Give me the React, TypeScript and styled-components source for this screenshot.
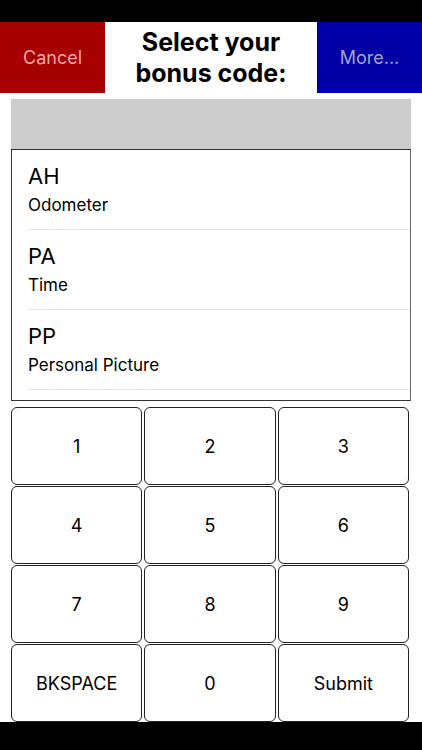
import React from 'react';
import styled, { createGlobalStyle } from 'styled-components';

const GlobalStyle = createGlobalStyle`
    html, body {
        margin: 0;
        padding: 0;
        background: #fff;
    }
    body {
        font-family: Inter, Roboto, "Liberation Sans", sans-serif;
    }
`;

const bonuses = [
    { code: 'AH', name: 'Odometer' },
    { code: 'PA', name: 'Time' },
    { code: 'PP', name: 'Personal Picture' },
];

const keys = ['1', '2', '3', '4', '5', '6', '7', '8', '9', 'BKSPACE', '0', 'Submit'];

const App: React.FC = () => {
    return (
        <Screen>
            <GlobalStyle />
            <StatusBar />
            <Header>
                <HeaderButton $bg="#a60000" $fg="#f2a6a6">Cancel</HeaderButton>
                <Title>
                    Select your
                    <br />
                    bonus code:
                </Title>
                <HeaderButton $bg="#0000a6" $fg="#a3a3c9">More...</HeaderButton>
            </Header>
            <Body>
                <CodeField />
                <BonusList>
                    {bonuses.map((b) => (
                        <BonusRow key={b.code}>
                            <BonusCode>{b.code}</BonusCode>
                            <BonusName>{b.name}</BonusName>
                        </BonusRow>
                    ))}
                </BonusList>
                <Keypad>
                    {keys.map((k) => (
                        <Key key={k}>{k}</Key>
                    ))}
                </Keypad>
            </Body>
            <HomeBar />
        </Screen>
    );
};

const Screen = styled.div`
    width: 422px;
    height: 750px;
    display: flex;
    flex-direction: column;
    overflow: hidden;
`;

const StatusBar = styled.div`
    height: 22px;
    background: #000;
    flex-shrink: 0;
`;

const Header = styled.div`
    height: 71px;
    display: flex;
    flex-shrink: 0;
`;

const HeaderButton = styled.button<{ $bg: string; $fg: string }>`
    width: 105px;
    border: none;
    padding: 0;
    background: ${(p) => p.$bg};
    color: ${(p) => p.$fg};
    font-family: inherit;
    font-size: 18px;
`;

const Title = styled.h1`
    flex: 1;
    margin: 0;
    display: flex;
    align-items: center;
    justify-content: center;
    text-align: center;
    font-size: 25px;
    line-height: 31px;
    font-weight: 700;
    color: #000;
`;

const Body = styled.div`
    flex: 1;
    display: flex;
    flex-direction: column;
    padding: 6px 11px 0 11px;
`;

const CodeField = styled.div`
    height: 50px;
    background: #cccccc;
`;

const BonusList = styled.div`
    height: 250px;
    border: 1px solid #333;
    border-right-color: #666;
    overflow: hidden;
`;

const BonusRow = styled.div`
    height: 80px;
    margin-left: 16px;
    border-bottom: 1px solid #e6e6e6;
    display: flex;
    flex-direction: column;
    padding-top: 13px;
    box-sizing: border-box;
`;

const BonusCode = styled.div`
    font-size: 22px;
    line-height: 26px;
    color: #000;
`;

const BonusName = styled.div`
    margin-top: 6px;
    font-size: 17px;
    line-height: 20px;
    color: #000;
`;

const Keypad = styled.div`
    margin-top: 6px;
    margin-right: 2px;
    height: 315px;
    display: grid;
    grid-template-columns: repeat(3, 1fr);
    grid-template-rows: repeat(4, 1fr);
    gap: 1px 2px;
`;

const Key = styled.button`
    border: 1.5px solid #222;
    border-radius: 6px;
    background: #fff;
    color: #000;
    font-family: inherit;
    font-size: 18px;
    padding: 0;
`;

const HomeBar = styled.div`
    height: 28px;
    background: #000;
    flex-shrink: 0;
`;

export default App;
